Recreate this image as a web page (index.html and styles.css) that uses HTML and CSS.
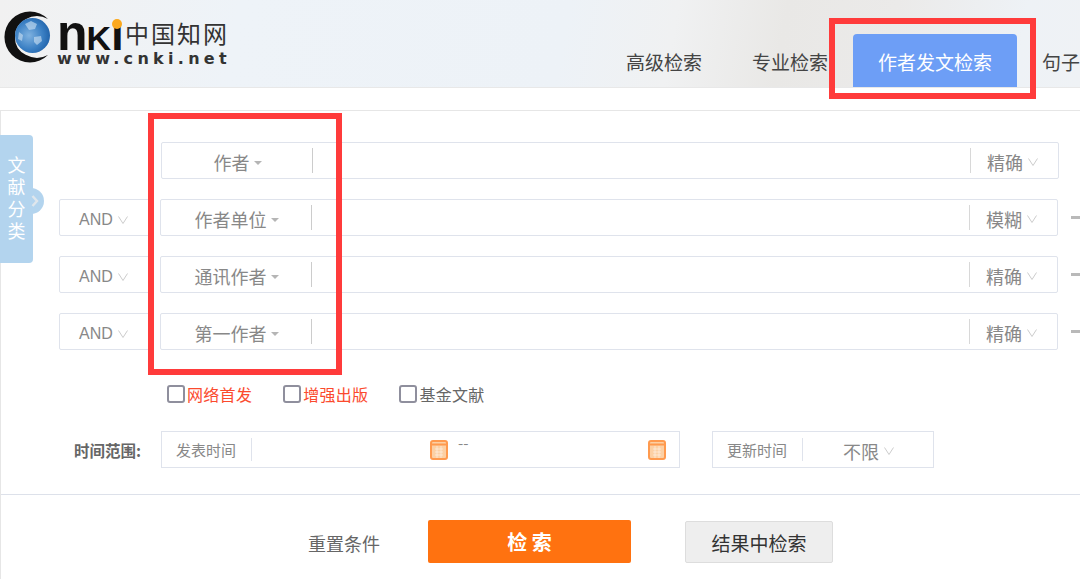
FILE: index.html
```html
<!DOCTYPE html>
<html lang="zh-CN">
<head>
  <meta charset="UTF-8">
  <title>CNKI</title>
  <link rel="stylesheet" href="styles.css">
</head>
<body>
  <!-- Header with logo and search tabs -->
  <div class="header">
    <div class="logo">
      <svg class="logo-mark" width="52" height="54" viewBox="0 0 52 54">
        <defs>
          <radialGradient id="globe" cx="0.4" cy="0.5" r="0.65">
            <stop offset="0" stop-color="#7fb2e0"/>
            <stop offset="0.6" stop-color="#3b80c4"/>
            <stop offset="1" stop-color="#1c5ea6"/>
          </radialGradient>
        </defs>
        <path d="M45 9A25.5 25.5 0 1 0 45 45A22 20 0 0 1 12 27A22 20 0 0 1 45 9Z" fill="#111"/>
        <circle cx="29.5" cy="25.5" r="17.5" fill="url(#globe)"/>
        <path d="M22 14l6-3 6 3-2 5-6 1zM31 27l7-1 1 5-5 4-3-3zM16 22l4 3-1 6-4-2z" fill="#cfe2f3" opacity="0.6"/>
      </svg>
      <div class="logo-text">
        <div class="logo-top">
          <span class="logo-n">n</span><span class="logo-k">K</span><span class="logo-i">ı</span>
          <span class="logo-cn">中国知网</span>
        </div>
        <div class="logo-url">www.cnki.net</div>
      </div>
    </div>
    <div class="nav">
      <div class="nav-item">高级检索</div>
      <div class="nav-item">专业检索</div>
      <div class="nav-item active">作者发文检索</div>
      <div class="nav-item">句子检索</div>
    </div>
  </div>

  <div class="panel">
    <!-- Side tab -->
    <div class="side-tab">
      <span class="side-text">文献分类</span>
      <svg class="side-arrow" width="8" height="14" viewBox="0 0 8 14"><path d="M1.5 2l4.5 5-4.5 5" fill="none" stroke="#dfe6ec" stroke-width="2.4"/></svg>
    </div>

    <div class="form">
      <div class="row row-first">
        <div class="field">
          <div class="field-key"><span>作者</span><i class="caret"></i></div>
          <div class="field-input"></div>
          <div class="field-match"><span>精确</span>
            <svg class="chevron" width="10" height="8" viewBox="0 0 10 8"><path d="M.5.5l4.5 7 4.5-7" fill="none" stroke="#ccc"/></svg>
          </div>
        </div>
      </div>
      <div class="row">
        <div class="logic"><span>AND</span>
          <svg class="chevron" width="10" height="8" viewBox="0 0 10 8"><path d="M.5.5l4.5 7 4.5-7" fill="none" stroke="#ccc"/></svg>
        </div>
        <div class="field">
          <div class="field-key"><span>作者单位</span><i class="caret"></i></div>
          <div class="field-input"></div>
          <div class="field-match"><span>模糊</span>
            <svg class="chevron" width="10" height="8" viewBox="0 0 10 8"><path d="M.5.5l4.5 7 4.5-7" fill="none" stroke="#ccc"/></svg>
          </div>
        </div>
        <i class="minus"></i>
      </div>
      <div class="row">
        <div class="logic"><span>AND</span>
          <svg class="chevron" width="10" height="8" viewBox="0 0 10 8"><path d="M.5.5l4.5 7 4.5-7" fill="none" stroke="#ccc"/></svg>
        </div>
        <div class="field">
          <div class="field-key"><span>通讯作者</span><i class="caret"></i></div>
          <div class="field-input"></div>
          <div class="field-match"><span>精确</span>
            <svg class="chevron" width="10" height="8" viewBox="0 0 10 8"><path d="M.5.5l4.5 7 4.5-7" fill="none" stroke="#ccc"/></svg>
          </div>
        </div>
        <i class="minus"></i>
      </div>
      <div class="row">
        <div class="logic"><span>AND</span>
          <svg class="chevron" width="10" height="8" viewBox="0 0 10 8"><path d="M.5.5l4.5 7 4.5-7" fill="none" stroke="#ccc"/></svg>
        </div>
        <div class="field">
          <div class="field-key"><span>第一作者</span><i class="caret"></i></div>
          <div class="field-input"></div>
          <div class="field-match"><span>精确</span>
            <svg class="chevron" width="10" height="8" viewBox="0 0 10 8"><path d="M.5.5l4.5 7 4.5-7" fill="none" stroke="#ccc"/></svg>
          </div>
        </div>
        <i class="minus"></i>
      </div>
    </div>

    <div class="checks">
      <label class="check red"><i class="box"></i>网络首发</label>
      <label class="check red"><i class="box"></i>增强出版</label>
      <label class="check"><i class="box"></i>基金文献</label>
    </div>

    <div class="time-row">
      <div class="time-label">时间范围:</div>
      <div class="time-box">
        <span class="time-name">发表时间</span>
        <span class="time-range">
          <svg class="cal" width="18" height="21" viewBox="0 0 18 21"><rect x="1" y="2" width="16" height="18" rx="2" fill="#fcd0a4" stroke="#ff9a4e" stroke-width="2"/><path d="M1 5.5h16" stroke="#ff9a4e" stroke-width="2"/><path d="M5 10h8M5 13h8M5 16h8M7 7v12M11 7v12" stroke="#fff" stroke-width="0.7" opacity="0.7"/></svg>
          <span class="dash">--</span>
          <svg class="cal" width="18" height="21" viewBox="0 0 18 21"><rect x="1" y="2" width="16" height="18" rx="2" fill="#fcd0a4" stroke="#ff9a4e" stroke-width="2"/><path d="M1 5.5h16" stroke="#ff9a4e" stroke-width="2"/><path d="M5 10h8M5 13h8M5 16h8M7 7v12M11 7v12" stroke="#fff" stroke-width="0.7" opacity="0.7"/></svg>
        </span>
      </div>
      <div class="time-box update">
        <span class="time-name">更新时间</span>
        <span class="update-value">不限
          <svg class="chevron" width="10" height="8" viewBox="0 0 10 8"><path d="M.5.5l4.5 7 4.5-7" fill="none" stroke="#ccc"/></svg>
        </span>
      </div>
    </div>

    <div class="actions">
      <span class="reset">重置条件</span>
      <button class="btn-search">检 索</button>
      <button class="btn-within">结果中检索</button>
    </div>
  </div>

  <!-- Red annotation frames -->
  <div class="mark mark-fields"></div>
  <div class="mark mark-tab"></div>
</body>
</html>
```

FILE: styles.css
```css
* {
  box-sizing: border-box;
}

body {
  margin: 0;
  width: 1080px;
  height: 579px;
  overflow: hidden;
  position: relative;
  background-color: #fff;
  font-family: "Noto Sans CJK SC", "Liberation Sans", sans-serif;
  color: #888;
}

.header {
  display: grid;
  grid-template-columns: 601px 1fr;
  height: 88px;
  border-bottom: 1px solid #e8e8e8;
  overflow: hidden;
  background: linear-gradient(100deg, #f1f1f1 0%, #eef3f8 22%, #edf2f7 52%, #f0f1f2 62%, #e9e8e6 72%, #ebeae9 82%, #eef2f6 94%, #eff2f5 100%);
}

.logo {
  display: flex;
  padding: 10px 0 0 3px;
}

.logo-mark {
  flex: none;
}

.logo-text {
  margin-left: 2px;
  color: #111;
}

.logo-top {
  display: flex;
  align-items: baseline;
  height: 40px;
  font-family: "Liberation Sans", sans-serif;
  font-weight: bold;
  line-height: 46px;
}

.logo-n {
  font-size: 50px;
  letter-spacing: -1px;
}

.logo-k {
  font-size: 34px;
}

.logo-i {
  position: relative;
  font-size: 46px;
}

.logo-i::before {
  content: "";
  position: absolute;
  left: 1px;
  top: 8px;
  width: 10px;
  height: 10px;
  border-radius: 50%;
  background-color: #fca81c;
}

.logo-cn {
  align-self: flex-start;
  margin-left: 1px;
  font-family: "Noto Sans CJK SC", sans-serif;
  font-size: 24px;
  font-weight: normal;
  letter-spacing: 2px;
  color: #333;
}

.logo-url {
  margin-top: 1px;
  font-family: "DejaVu Sans", sans-serif;
  font-size: 16px;
  font-weight: bold;
  line-height: 15px;
  letter-spacing: 4.3px;
  color: #333;
}

.nav {
  display: flex;
  align-items: flex-end;
  height: 87px;
}

.nav-item {
  flex: none;
  height: 53px;
  padding: 0 25px;
  font-size: 19px;
  line-height: 55px;
  color: #444;
}

.nav-item.active {
  background-color: #6d9ef6;
  border-radius: 4px 4px 0 0;
  color: #fff;
}

.panel {
  position: relative;
  margin-top: 22px;
  border-top: 1px solid #e6e6e6;
  border-left: 1px solid #e6e6e6;
}

.side-tab {
  position: absolute;
  left: -1px;
  top: 24px;
  display: flex;
  justify-content: center;
  align-items: center;
  width: 33px;
  height: 128px;
  padding-bottom: 4px;
  background-color: #b3d4ee;
  border-radius: 0 4px 4px 0;
}

.side-tab::after {
  content: "";
  position: absolute;
  left: 18px;
  top: 53px;
  width: 26px;
  height: 26px;
  border-radius: 50%;
  background-color: #b3d4ee;
}

.side-text {
  position: relative;
  z-index: 1;
  width: 18px;
  font-size: 18px;
  line-height: 22px;
  color: #fff;
}

.side-arrow {
  position: absolute;
  z-index: 1;
  left: 31px;
  top: 59px;
}

.form {
  display: flex;
  flex-direction: column;
  gap: 20px;
  padding-top: 31px;
}

.row {
  display: flex;
  align-items: center;
  height: 37px;
  padding-left: 58px;
}

.row-first {
  padding-left: 160px;
}

.logic {
  flex: none;
  display: flex;
  align-items: center;
  width: 91px;
  height: 37px;
  margin-right: 10px;
  padding: 4px 0 0 19px;
  border: 1px solid #dfe3ec;
  border-radius: 2px;
  font-family: "Liberation Sans", sans-serif;
  font-size: 16px;
}

.logic .chevron {
  margin-left: 5px;
}

.field {
  flex: none;
  display: flex;
  align-items: center;
  width: 898px;
  height: 37px;
  border: 1px solid #dfe3ec;
  border-radius: 2px;
}

.field-key {
  display: flex;
  justify-content: center;
  align-items: center;
  gap: 4px;
  width: 151px;
  height: 25px;
  padding: 3px 0 0 1px;
  border-right: 1px solid #ccc;
  font-size: 18px;
}

.caret {
  width: 0;
  height: 0;
  margin-top: 2px;
  border-left: 4px solid transparent;
  border-right: 4px solid transparent;
  border-top: 4px solid #b5b5b5;
}

.field-input {
  flex: 1;
}

.field-match {
  display: flex;
  align-items: center;
  width: 88px;
  height: 25px;
  padding: 3px 0 0 16px;
  border-left: 1px solid #d8d8d8;
  font-size: 18px;
}

.field-match .chevron {
  margin-left: 5px;
}

.minus {
  flex: none;
  width: 12px;
  height: 3px;
  margin-left: 13px;
  background-color: #b9b9b9;
}

.checks {
  display: flex;
  gap: 31px;
  height: 20px;
  margin-top: 34px;
  padding-left: 166px;
}

.check {
  display: flex;
  align-items: center;
  gap: 2px;
  font-size: 16px;
  line-height: 20px;
  letter-spacing: 0.3px;
  color: #666;
}

.check.red {
  color: #fb4a2e;
}

.box {
  flex: none;
  width: 18px;
  height: 18px;
  border: 2.5px solid #8f8f9d;
  border-radius: 3px;
}

.time-row {
  display: flex;
  align-items: center;
  height: 37px;
  margin-top: 27px;
  padding-left: 73px;
}

.time-label {
  width: 87px;
  font-size: 15.5px;
  font-weight: bold;
  color: #666;
}

.time-box {
  display: flex;
  align-items: center;
  width: 519px;
  height: 37px;
  padding: 0 14px;
  border: 1px solid #dfe3ec;
}

.time-name {
  flex: none;
  width: 76px;
  height: 23px;
  border-right: 1px solid #dfe3ec;
  font-size: 15px;
  line-height: 23px;
}

.time-range {
  display: flex;
  align-items: center;
  margin-left: 178px;
}

.dash {
  width: 190px;
  margin-left: 10px;
  margin-top: -14px;
  font-size: 15px;
  line-height: 15px;
}

.update {
  width: 222px;
  margin-left: 32px;
}

.update-value {
  display: flex;
  align-items: center;
  gap: 5px;
  margin-left: 40px;
  padding-top: 2px;
  font-size: 18px;
}

.actions {
  display: flex;
  align-items: flex-start;
  height: 85px;
  margin-top: 26px;
  padding: 25px 0 0 307px;
  border-top: 1px solid #dde1ea;
}

.reset {
  width: 72px;
  font-size: 18px;
  line-height: 46px;
  white-space: nowrap;
  color: #666;
}

.btn-search {
  width: 203px;
  height: 43px;
  margin-left: 48px;
  border: none;
  border-radius: 2px;
  background-color: #ff7210;
  font-family: inherit;
  font-size: 20px;
  font-weight: bold;
  color: #fff;
}

.btn-within {
  width: 148px;
  height: 42px;
  margin-top: 1px;
  margin-left: 54px;
  border: 1px solid #ddd;
  border-radius: 2px;
  background-color: #eee;
  font-family: inherit;
  font-size: 19px;
  color: #333;
}

.mark {
  position: absolute;
  border: 6px solid #ff3b3b;
  pointer-events: none;
}

.mark-fields {
  left: 148px;
  top: 113px;
  width: 194px;
  height: 262px;
}

.mark-tab {
  left: 829px;
  top: 18px;
  width: 207px;
  height: 81px;
}
```
